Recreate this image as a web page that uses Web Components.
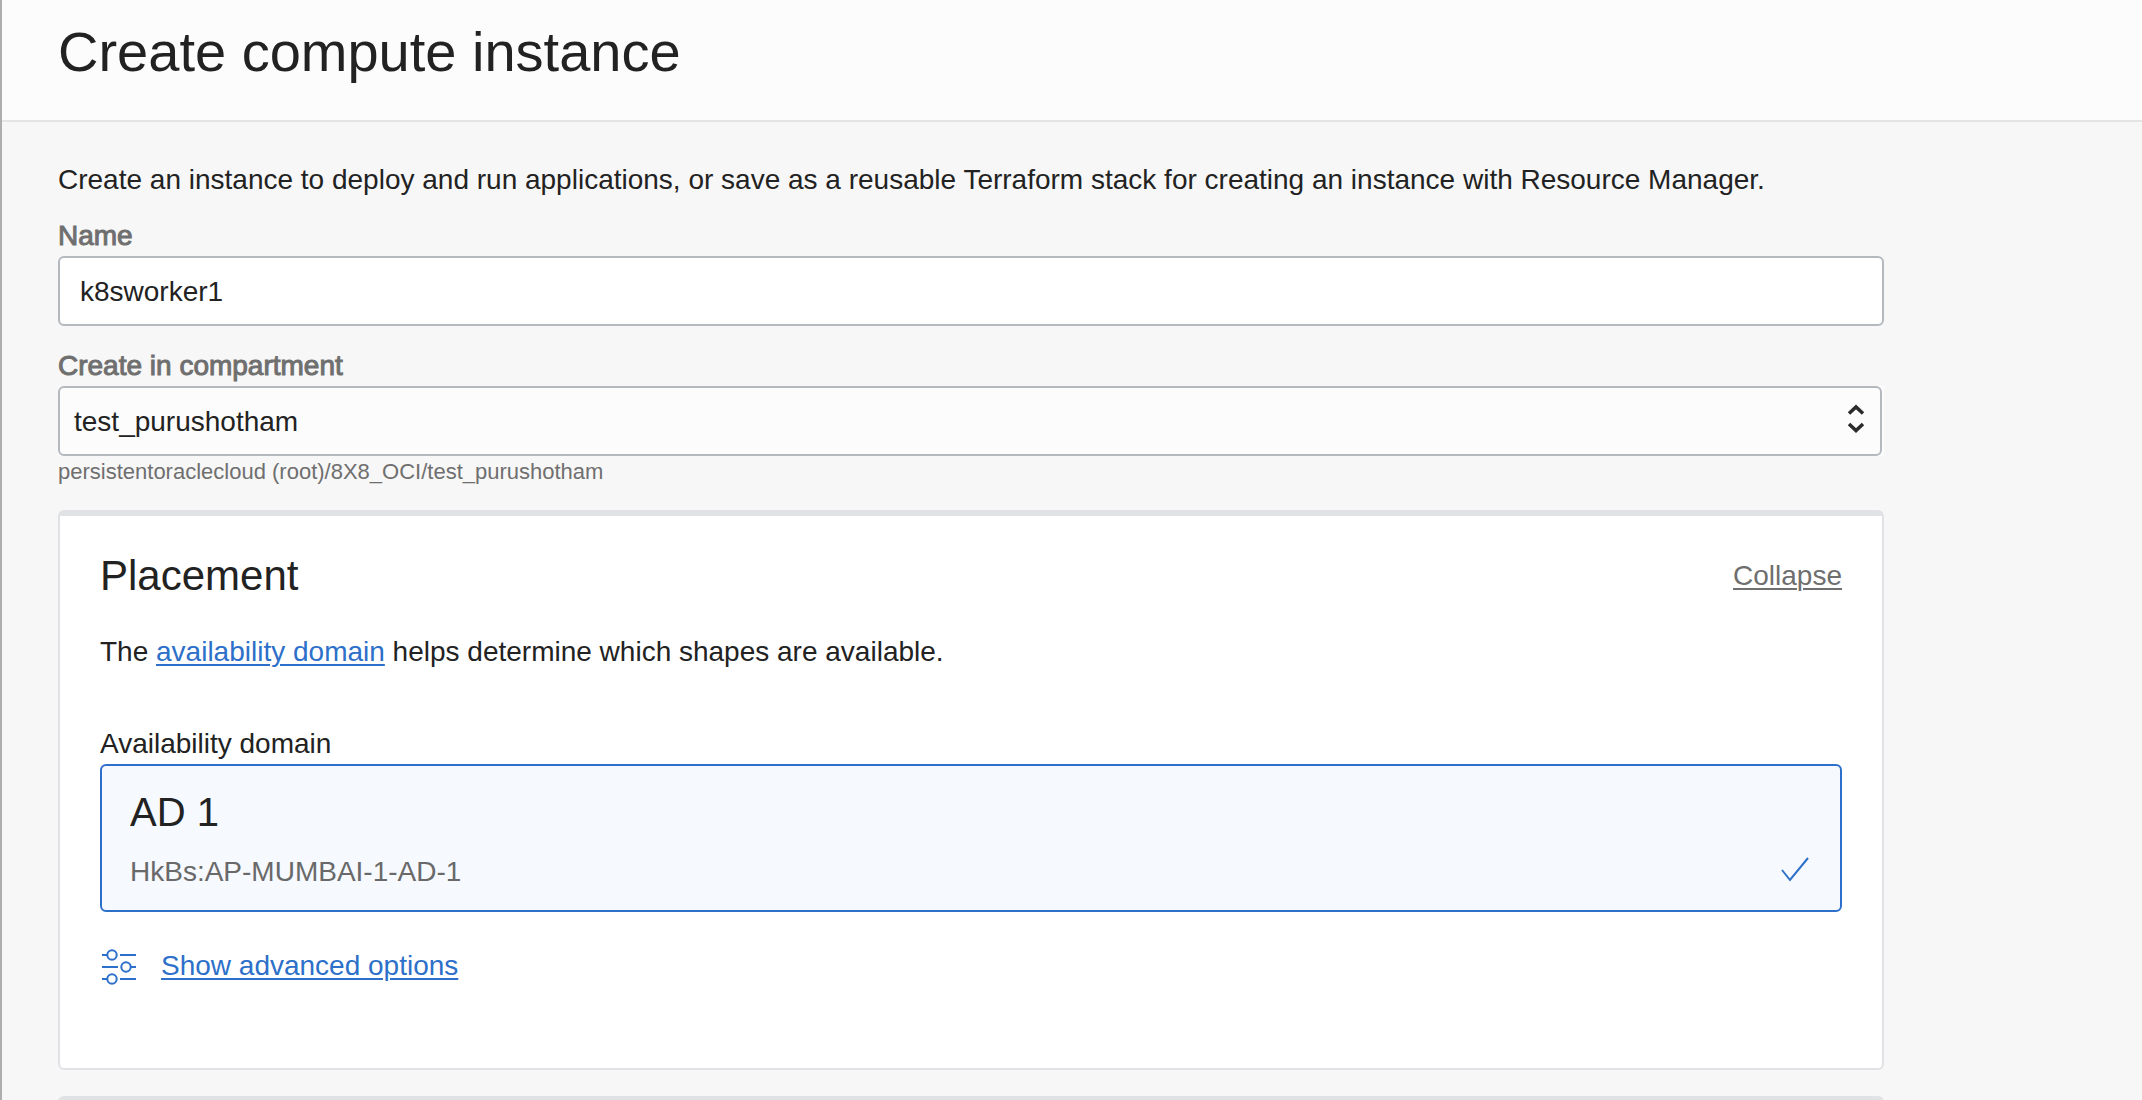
<!DOCTYPE html>
<html lang="en">
<head>
<meta charset="utf-8">
<title>Create compute instance</title>
<style>
  html, body { margin: 0; height: 100%; overflow: hidden; }
  body {
    font: 28px/32px "Helvetica Neue", "Liberation Sans", Arial, sans-serif;
    color: #222;
    --muted: #6f6f6f;
    --blue: #2d70c9;
    --line: #b4b8bf;
    --card-line: #e1e2e6;
  }
</style>
</head>
<body>
<oci-page>
  <span slot="title">Create compute instance</span>
  <oci-text>Create an instance to deploy and run applications, or save as a reusable Terraform stack for creating an instance with Resource Manager.</oci-text>
  <oci-input label="Name" value="k8sworker1"></oci-input>
  <oci-select label="Create in compartment" value="test_purushotham" hint="persistentoraclecloud (root)/8X8_OCI/test_purushotham"></oci-select>
  <oci-card heading="Placement">
    <oci-text>The <oci-link>availability domain</oci-link> helps determine which shapes are available.</oci-text>
    <oci-choice label="Availability domain" name="AD 1" detail="HkBs:AP-MUMBAI-1-AD-1"></oci-choice>
    <oci-options>Show advanced options</oci-options>
  </oci-card>
  <oci-card></oci-card>
</oci-page>

<script>
const define = (name, render) => customElements.define(name, class extends HTMLElement {
  connectedCallback() {
    if (this.shadowRoot) return;
    const root = this.attachShadow({ mode: "open" });
    root.innerHTML = "<style>*{box-sizing:border-box}:host([hidden]){display:none}</style>" + render(this);
  }
});
const attr = (el, key) => el.getAttribute(key) || "";

define("oci-page", () => `
  <style>
    :host { display: flex; flex-direction: column; box-sizing: border-box; height: 100%; overflow: hidden; border-left: 2px solid #aeaeae; background: #f7f7f7; }
    header { flex: none; padding: 20px 56px 36px; background: #fcfcfc; border-bottom: 2px solid #e4e4e4; }
    h1 { margin: 0; font-size: 56px; line-height: 64px; font-weight: 400; }
    main { flex: 1; min-height: 0; display: flex; flex-direction: column; gap: 24px; padding: 42px 258px 0 56px; overflow: hidden; }
    ::slotted(*) { flex: none; }
    ::slotted(oci-card) { margin-top: 2px; }
  </style>
  <header><h1><slot name="title"></slot></h1></header>
  <main><slot></slot></main>`);

define("oci-text", () => `
  <style>:host { display: block; } p { margin: 0; }</style>
  <p><slot></slot></p>`);

define("oci-link", () => `
  <style>
    :host { display: inline; }
    a { color: var(--blue); text-decoration: underline; text-decoration-thickness: 2px; text-underline-offset: 3px; }
  </style>
  <a href="#"><slot></slot></a>`);

const fieldStyle = `
    :host { display: flex; flex-direction: column; gap: 4px; }
    label { color: var(--muted); -webkit-text-stroke: 1px var(--muted); }
    input, select { display: block; width: 100%; height: 70px; margin: 0; font: inherit; color: inherit; border: 2px solid var(--line); border-radius: 6px; outline: none; }`;

define("oci-input", el => `
  <style>${fieldStyle}
    input { padding: 2px 20px 0; background: #fff; }
  </style>
  <label for="field">${attr(el, "label")}</label>
  <input id="field" type="text" value="${attr(el, "value")}">`);

define("oci-select", el => `
  <style>${fieldStyle}
    .box { display: grid; align-items: center; padding-right: 2px; background: #fcfcfc; }
    .box > * { grid-area: 1 / 1; }
    select { appearance: none; padding: 2px 60px 0 14px; background: #fcfcfc; }
    svg { justify-self: end; margin-right: 16px; pointer-events: none; }
    small { font-size: 22px; line-height: 24px; color: var(--muted); }
  </style>
  <label for="field">${attr(el, "label")}</label>
  <div class="box">
    <select id="field"><option>${attr(el, "value")}</option></select>
    <svg width="20" height="34" viewBox="0 0 20 34" fill="none" stroke="#2b2b2b" stroke-width="3.500"><path d="M3 9.500L10 3L17 9.500M3 20L10 26.500L17 20"/></svg>
  </div>
  <small>${attr(el, "hint")}</small>`);

define("oci-card", el => `
  <style>
    :host { display: block; box-sizing: border-box; padding: 36px 40px 84px; background: #fff; border: 2px solid var(--card-line); border-top-width: 6px; border-radius: 6px; }
    header { display: flex; justify-content: space-between; align-items: center; margin-bottom: 36px; }
    h2 { margin: 0; font-size: 42px; line-height: 48px; font-weight: 400; }
    button { padding: 0; border: 0; background: none; font: inherit; color: var(--muted); text-decoration: underline; text-decoration-thickness: 2px; text-underline-offset: 3px; cursor: pointer; }
  </style>
  ${attr(el, "heading") ? `<header><h2>${attr(el, "heading")}</h2><button type="button">Collapse</button></header>` : ""}
  <slot></slot>`);

define("oci-choice", el => `
  <style>
    :host { display: flex; flex-direction: column; gap: 4px; margin: 60px 0 36px; }
    button { display: flex; justify-content: space-between; align-items: flex-end; width: 100%; padding: 24px 28px 22px; text-align: left; font: inherit; color: inherit; background: #f6f9fe; border: 2px solid var(--blue); border-radius: 6px; }
    .words { display: flex; flex-direction: column; gap: 22px; }
    .name { font-size: 40px; line-height: 44px; }
    .detail { color: #696969; }
  </style>
  <span id="label">${attr(el, "label")}</span>
  <button type="button" aria-pressed="true" aria-describedby="label">
    <span class="words"><span class="name">${attr(el, "name")}</span><span class="detail">${attr(el, "detail")}</span></span>
    <svg width="32" height="32" viewBox="0 0 32 32" fill="none" stroke="var(--blue)" stroke-width="2"><path d="M2 14L10 24L28 2"/></svg>
  </button>`);

define("oci-options", () => `
  <style>
    :host { display: flex; align-items: center; gap: 24px; }
    button { padding: 0; border: 0; background: none; font: inherit; color: var(--blue); text-decoration: underline; text-decoration-thickness: 2px; text-underline-offset: 3px; cursor: pointer; }
  </style>
  <svg width="37" height="36" viewBox="0 0 37 36" overflow="visible" fill="none" stroke="var(--blue)" stroke-width="2"><circle cx="12" cy="7" r="4.700"/><circle cx="26" cy="19" r="4.700"/><circle cx="12" cy="31" r="4.700"/><path d="M2 7H7M20 7H36M2 19H18M31 19H36M2 31H7M20 31H36"/></svg>
  <button type="button"><slot></slot></button>`);
</script>
</body>
</html>
